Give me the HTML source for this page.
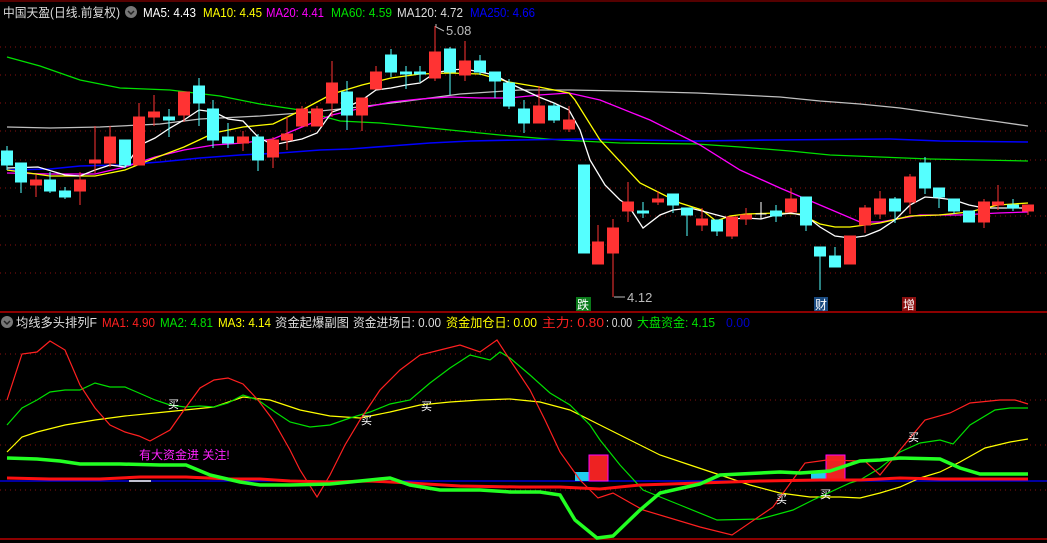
<!DOCTYPE html>
<html><head><meta charset="utf-8"><style>
html,body{margin:0;padding:0;background:#000;width:1047px;height:543px;overflow:hidden}
svg{display:block}
text{font-family:"Liberation Sans","Noto Sans CJK SC",sans-serif}
</style></head><body>
<svg width="1047" height="543" viewBox="0 0 1047 543" xmlns="http://www.w3.org/2000/svg">
<rect width="1047" height="543" fill="#000"/>
<line x1="0" y1="1" x2="1047" y2="1" stroke="#a00" stroke-width="1"/>
<g stroke="#8a1010" stroke-dasharray="1,4" stroke-width="1">
<line x1="0" y1="47" x2="1047" y2="47"/><line x1="0" y1="75" x2="1047" y2="75"/><line x1="0" y1="103" x2="1047" y2="103"/><line x1="0" y1="131" x2="1047" y2="131"/><line x1="0" y1="160" x2="1047" y2="160"/><line x1="0" y1="188" x2="1047" y2="188"/><line x1="0" y1="216" x2="1047" y2="216"/><line x1="0" y1="245" x2="1047" y2="245"/><line x1="0" y1="273" x2="1047" y2="273"/>
<line x1="0" y1="354" x2="1047" y2="354"/><line x1="0" y1="400" x2="1047" y2="400"/><line x1="0" y1="445" x2="1047" y2="445"/><line x1="0" y1="490" x2="1047" y2="490"/>
</g>
<line x1="0" y1="312" x2="1047" y2="312" stroke="#b00" stroke-width="1.5"/>
<line x1="0" y1="539" x2="1047" y2="539" stroke="#b00" stroke-width="1.5"/>

<g fill="none" stroke-width="1.3">
<polyline stroke="#00e000" points="7,57 40,66 80,80 120,88 170,90 220,96 260,104 300,110 340,121 380,123 420,127 460,131 500,135 560,140 620,143 697,144 740,147 790,151 830,155 880,157 930,159 980,160 1028,161"/>
<polyline stroke="#c0c0c0" points="7,127 50,128 100,127 140,125 160,124 200,119 260,116 300,113 350,108 400,102 460,94 520,90 570,90 620,91 660,92 697,93 740,95 780,97 820,101 860,104 900,108 950,115 1000,122 1028,126"/>
<polyline stroke="#0000ff" stroke-width="1.6" points="7,170 50,169 80,166 120,165 160,162 200,158 240,155 280,153 320,150 350,149 390,146 430,143 470,141 520,140 580,139 640,140 697,141 770,140 890,139 940,141 1028,142"/>
<polyline stroke="#ff00ff" points="7,173 50,174 95,174 125,167 155,157 184,150 214,145 243,143 273,139 302,127 332,115 362,108 391,102 420,99 450,97 480,98 509,98 539,95 569,93 600,100 650,120 700,145 740,170 780,188 820,205 860,222 880,222 920,215 960,215 998,213 1028,212"/>
<polyline stroke="#ffff00" points="7,170 50,176 95,176 125,170 155,158 184,147 199,140 214,133 243,127 273,124 302,110 332,94 362,85 391,78 420,74 450,73 480,74 509,82 539,87 569,93 575,100 600,140 640,183 680,203 702,210 716,221 730,216 746,214 776,213 800,214 820,224 835,227 850,227 880,223 910,216 939,215 969,212 998,205 1028,203"/>
<polyline stroke="#ffffff" points="7,168 38,167 65,175 80,176 95,170 110,165 125,167 140,145 155,138 170,128 184,120 199,110 214,112 228,119 243,121 258,137 273,145 287,142 302,139 317,133 332,112 347,107 362,100 376,90 391,88 406,85 420,83 435,73 450,70 465,69 480,72 495,75 509,83 524,90 539,97 554,103 569,110 580,130 590,160 605,185 620,200 628,205 643,228 660,215 673,210 690,208 702,211 732,219 746,218 761,219 776,215 791,213 806,216 820,227 835,236 850,238 865,236 880,230 895,220 910,205 925,197 939,198 954,200 969,205 984,208 1028,208"/>
</g>

<g fill="#ff3333" stroke="#ff3333" stroke-width="1">
<line x1="36" y1="175" x2="36" y2="197"/><rect x="30.5" y="180" width="11" height="5"/>
<line x1="80" y1="172" x2="80" y2="205"/><rect x="74.5" y="180" width="11" height="11"/>
<line x1="95" y1="126" x2="95" y2="173"/><rect x="89.5" y="160" width="11" height="3"/>
<line x1="110" y1="126" x2="110" y2="167"/><rect x="104.5" y="137" width="11" height="26"/>
<line x1="139" y1="103" x2="139" y2="165"/><rect x="133.5" y="117" width="11" height="48"/>
<line x1="154" y1="95" x2="154" y2="126"/><rect x="148.5" y="112" width="11" height="5"/>
<line x1="184" y1="92" x2="184" y2="122"/><rect x="178.5" y="92" width="11" height="23"/>
<line x1="243" y1="131" x2="243" y2="151"/><rect x="237.5" y="137" width="11" height="6"/>
<line x1="273" y1="137" x2="273" y2="168"/><rect x="267.5" y="140" width="11" height="17"/>
<line x1="287" y1="117" x2="287" y2="150"/><rect x="281.5" y="134" width="11" height="6"/>
<line x1="302" y1="106" x2="302" y2="126"/><rect x="296.5" y="109" width="11" height="17"/>
<line x1="317" y1="106" x2="317" y2="126"/><rect x="311.5" y="109" width="11" height="17"/>
<line x1="332" y1="61" x2="332" y2="117"/><rect x="326.5" y="83" width="11" height="20"/>
<line x1="362" y1="98" x2="362" y2="131"/><rect x="356.5" y="98" width="11" height="17"/>
<line x1="376" y1="66" x2="376" y2="89"/><rect x="370.5" y="72" width="11" height="17"/>
<line x1="435" y1="26" x2="435" y2="81"/><rect x="429.5" y="52" width="11" height="26"/>
<line x1="465" y1="41" x2="465" y2="81"/><rect x="459.5" y="61" width="11" height="14"/>
<line x1="539" y1="86" x2="539" y2="123"/><rect x="533.5" y="106" width="11" height="17"/>
<line x1="569" y1="106" x2="569" y2="132"/><rect x="563.5" y="120" width="11" height="9"/>
<line x1="598" y1="225" x2="598" y2="264"/><rect x="592.5" y="242" width="11" height="22"/>
<line x1="613" y1="219" x2="613" y2="297"/><rect x="607.5" y="228" width="11" height="25"/>
<line x1="628" y1="182" x2="628" y2="222"/><rect x="622.5" y="202" width="11" height="9"/>
<line x1="658" y1="191" x2="658" y2="205"/><rect x="652.5" y="199" width="11" height="3"/>
<line x1="702" y1="208" x2="702" y2="231"/><rect x="696.5" y="219" width="11" height="6"/>
<line x1="732" y1="217" x2="732" y2="239"/><rect x="726.5" y="217" width="11" height="19"/>
<line x1="746" y1="208" x2="746" y2="225"/><rect x="740.5" y="215" width="11" height="4"/>
<line x1="791" y1="188" x2="791" y2="212"/><rect x="785.5" y="199" width="11" height="13"/>
<rect x="844.5" y="236" width="11" height="28"/>
<line x1="865" y1="205" x2="865" y2="233"/><rect x="859.5" y="208" width="11" height="17"/>
<line x1="880" y1="191" x2="880" y2="219"/><rect x="874.5" y="199" width="11" height="15"/>
<line x1="910" y1="174" x2="910" y2="214"/><rect x="904.5" y="177" width="11" height="25"/>
<line x1="984" y1="199" x2="984" y2="228"/><rect x="978.5" y="202" width="11" height="20"/>
<line x1="998" y1="185" x2="998" y2="210"/><rect x="992.5" y="202" width="11" height="3"/>
<line x1="1028" y1="205" x2="1028" y2="215"/><rect x="1022.5" y="205" width="11" height="6"/>
</g>
<g fill="#55ffff" stroke="#55ffff" stroke-width="1">
<line x1="7" y1="146" x2="7" y2="170"/><rect x="1.5" y="151" width="11" height="14"/>
<line x1="21" y1="163" x2="21" y2="193"/><rect x="15.5" y="163" width="11" height="19"/>
<line x1="50" y1="172" x2="50" y2="193"/><rect x="44.5" y="180" width="11" height="11"/>
<line x1="65" y1="187" x2="65" y2="199"/><rect x="59.5" y="191" width="11" height="6"/>
<line x1="125" y1="140" x2="125" y2="168"/><rect x="119.5" y="140" width="11" height="25"/>
<line x1="169" y1="109" x2="169" y2="137"/><rect x="163.5" y="117" width="11" height="3"/>
<line x1="199" y1="78" x2="199" y2="126"/><rect x="193.5" y="86" width="11" height="17"/>
<line x1="213" y1="100" x2="213" y2="148"/><rect x="207.5" y="109" width="11" height="31"/>
<line x1="228" y1="123" x2="228" y2="148"/><rect x="222.5" y="137" width="11" height="6"/>
<line x1="258" y1="134" x2="258" y2="171"/><rect x="252.5" y="137" width="11" height="23"/>
<line x1="347" y1="81" x2="347" y2="130"/><rect x="341.5" y="92" width="11" height="23"/>
<line x1="391" y1="49" x2="391" y2="77"/><rect x="385.5" y="55" width="11" height="17"/>
<line x1="406" y1="66" x2="406" y2="89"/><rect x="400.5" y="72" width="11" height="2"/>
<line x1="420" y1="66" x2="420" y2="82"/><rect x="414.5" y="72" width="11" height="2"/>
<line x1="450" y1="47" x2="450" y2="95"/><rect x="444.5" y="49" width="11" height="23"/>
<line x1="480" y1="55" x2="480" y2="75"/><rect x="474.5" y="61" width="11" height="11"/>
<line x1="495" y1="72" x2="495" y2="98"/><rect x="489.5" y="72" width="11" height="9"/>
<line x1="509" y1="79" x2="509" y2="109"/><rect x="503.5" y="83" width="11" height="23"/>
<line x1="524" y1="100" x2="524" y2="133"/><rect x="518.5" y="109" width="11" height="14"/>
<line x1="554" y1="103" x2="554" y2="123"/><rect x="548.5" y="106" width="11" height="14"/>
<rect x="578.5" y="165" width="11" height="88"/>
<line x1="643" y1="202" x2="643" y2="218"/><rect x="637.5" y="211" width="11" height="2"/>
<line x1="673" y1="194" x2="673" y2="213"/><rect x="667.5" y="194" width="11" height="11"/>
<line x1="687" y1="208" x2="687" y2="236"/><rect x="681.5" y="208" width="11" height="7"/>
<line x1="717" y1="220" x2="717" y2="236"/><rect x="711.5" y="220" width="11" height="11"/>
<line x1="776" y1="205" x2="776" y2="222"/><rect x="770.5" y="211" width="11" height="5"/>
<line x1="806" y1="197" x2="806" y2="231"/><rect x="800.5" y="197" width="11" height="28"/>
<line x1="820" y1="247" x2="820" y2="290"/><rect x="814.5" y="247" width="11" height="9"/>
<line x1="835" y1="247" x2="835" y2="267"/><rect x="829.5" y="256" width="11" height="11"/>
<line x1="895" y1="197" x2="895" y2="223"/><rect x="889.5" y="199" width="11" height="12"/>
<line x1="925" y1="157" x2="925" y2="194"/><rect x="919.5" y="163" width="11" height="25"/>
<line x1="939" y1="188" x2="939" y2="208"/><rect x="933.5" y="188" width="11" height="9"/>
<line x1="954" y1="199" x2="954" y2="214"/><rect x="948.5" y="199" width="11" height="12"/>
<rect x="963.5" y="211" width="11" height="11"/>
<line x1="1013" y1="199" x2="1013" y2="211"/><rect x="1007.5" y="205" width="11" height="3"/>
</g>
<g stroke="#fff" stroke-width="1"><line x1="761" y1="202" x2="761" y2="219"/><line x1="755.5" y1="214" x2="766.5" y2="214"/></g>

<polyline points="444,31 436,27 436,24" fill="none" stroke="#bbb"/>
<text x="446" y="35" font-size="13" fill="#bbb">5.08</text>
<line x1="614" y1="297" x2="625" y2="297" stroke="#bbb"/>
<text x="627" y="302" font-size="13" fill="#bbb">4.12</text>
<rect x="576" y="297" width="15" height="14" fill="#0a7a1a"/><text x="577" y="309" font-size="12" fill="#fff">跌</text>
<rect x="814" y="297" width="14" height="14" fill="#1a4a80"/><text x="815" y="309" font-size="12" fill="#fff">财</text>
<rect x="902" y="297" width="14" height="14" fill="#8a1010"/><text x="903" y="309" font-size="12" fill="#fff">增</text>

<g font-size="12.5" lengthAdjust="spacingAndGlyphs">
<text x="3" y="17" fill="#ddd" textLength="117" lengthAdjust="spacingAndGlyphs">中国天盈(日线.前复权)</text>
<text x="143" y="17" fill="#fff" textLength="53" lengthAdjust="spacingAndGlyphs">MA5: 4.43</text>
<text x="203" y="17" fill="#ffff00" textLength="59" lengthAdjust="spacingAndGlyphs">MA10: 4.45</text>
<text x="266" y="17" fill="#ff00ff" textLength="58" lengthAdjust="spacingAndGlyphs">MA20: 4.41</text>
<text x="331" y="17" fill="#00e000" textLength="61" lengthAdjust="spacingAndGlyphs">MA60: 4.59</text>
<text x="397" y="17" fill="#ddd" textLength="66" lengthAdjust="spacingAndGlyphs">MA120: 4.72</text>
<text x="470" y="17" fill="#0000ff" textLength="65" lengthAdjust="spacingAndGlyphs">MA250: 4.66</text>
</g>
<circle cx="131" cy="12" r="6" fill="#777"/><polyline points="128,11 131,14 134,11" fill="none" stroke="#222" stroke-width="1.5"/>

<circle cx="7" cy="322" r="6" fill="#777"/><polyline points="4,321 7,324 10,321" fill="none" stroke="#222" stroke-width="1.5"/>
<g font-size="12.5">
<text x="16" y="327" fill="#ddd" textLength="81" lengthAdjust="spacingAndGlyphs">均线多头排列F</text>
<text x="102" y="327" fill="#ff2020" textLength="53" lengthAdjust="spacingAndGlyphs">MA1: 4.90</text>
<text x="160" y="327" fill="#00e000" textLength="53" lengthAdjust="spacingAndGlyphs">MA2: 4.81</text>
<text x="218" y="327" fill="#ffff00" textLength="53" lengthAdjust="spacingAndGlyphs">MA3: 4.14</text>
<text x="275" y="327" fill="#ddd" textLength="74" lengthAdjust="spacingAndGlyphs">资金起爆副图</text>
<text x="353" y="327" fill="#ddd" textLength="88" lengthAdjust="spacingAndGlyphs">资金进场日: 0.00</text>
<text x="446" y="327" fill="#ffff00" textLength="91" lengthAdjust="spacingAndGlyphs">资金加仓日: 0.00</text>
<text x="542" y="327" fill="#ff2020" textLength="62" lengthAdjust="spacingAndGlyphs">主力: 0.80</text>
<text x="606" y="327" fill="#ddd" textLength="26" lengthAdjust="spacingAndGlyphs">: 0.00</text>
<text x="637" y="327" fill="#00e000" textLength="78" lengthAdjust="spacingAndGlyphs">大盘资金: 4.15</text>
<text x="726" y="327" fill="#0000cc" textLength="24" lengthAdjust="spacingAndGlyphs">0.00</text>
</g>

<line x1="0" y1="481" x2="1047" y2="481" stroke="#0000ff" stroke-width="1.3"/>
<line x1="129" y1="481" x2="151" y2="481" stroke="#fff" stroke-width="1.5"/>
<rect x="575" y="472" width="15" height="9" fill="#22ccee"/>
<rect x="589" y="455" width="19" height="26" fill="#ee2222" stroke="#ff00ff"/>
<rect x="811" y="472" width="15" height="9" fill="#22ccee"/>
<rect x="826" y="455" width="19" height="26" fill="#ee2222" stroke="#ff00ff"/>
<g fill="none">
<polyline stroke="#ffff00" stroke-width="1.2" points="7,452 22,437 37,432 65,425 95,420 125,416 155,413 185,410 214,407 243,397 270,400 300,410 330,416 360,418 390,412 420,405 450,402 480,400 510,399 540,402 570,410 600,425 630,440 660,455 690,465 720,475 750,485 780,493 810,497 840,497 860,498 880,493 900,487 920,478 940,472 960,462 985,448 1010,442 1028,439"/>
<polyline stroke="#00e000" stroke-width="1.2" points="7,425 22,408 37,400 50,392 65,390 80,390 95,383 110,387 125,387 139,393 155,400 170,405 185,407 200,406 214,407 228,403 243,395 258,400 275,412 290,422 310,427 330,425 350,418 370,412 390,404 410,400 430,383 450,368 470,355 490,360 500,352 510,358 530,375 550,393 570,405 590,425 600,440 620,465 643,490 680,505 717,520 760,519 793,510 813,500 850,483 860,480 880,468 900,452 920,443 940,440 953,444 970,425 995,410 1010,408 1028,408"/>
<polyline stroke="#ff2020" stroke-width="1.2" points="7,400 22,354 37,352 50,341 65,350 80,385 95,408 110,425 125,432 139,436 150,441 170,430 184,410 200,388 214,380 228,378 243,384 258,400 273,420 290,450 300,470 317,497 330,475 345,445 360,420 380,390 400,370 420,355 440,350 460,345 480,352 497,340 510,360 530,390 545,420 560,452 580,480 598,498 613,493 643,510 700,527 732,535 773,507 805,463 827,460 860,461 866,462 880,475 900,450 925,420 950,413 970,403 1000,400 1015,400 1028,404"/>
<polyline stroke="#ff1010" stroke-width="3" points="7,478 50,479 100,479 140,477 186,477 230,479 260,479 290,481 330,482 370,481 410,483 460,486 520,487 560,487 600,489 640,485 700,483 760,481 820,480 860,480 900,478 940,479 1028,479"/>
<polyline stroke="#22ff22" stroke-width="3.5" points="7,458 37,459 60,461 80,464 120,464 160,465 186,465 210,475 240,482 260,485 290,485 330,484 370,480 390,478 410,485 440,490 480,490 510,492 540,492 560,495 575,520 597,538 613,536 640,510 660,493 700,484 720,475 780,472 800,473 830,471 860,461 880,460 900,458 940,459 960,468 980,474 1000,474 1028,474"/>
</g>
<g font-size="11" fill="#fff">
<text x="168" y="408">买</text><text x="361" y="424">买</text><text x="421" y="410">买</text><text x="776" y="503">买</text><text x="820" y="498">买</text><text x="908" y="441">买</text>
</g>
<text x="139" y="459" font-size="12" fill="#ff22ff">有大资金进 关注!</text>
</svg>
</body></html>
